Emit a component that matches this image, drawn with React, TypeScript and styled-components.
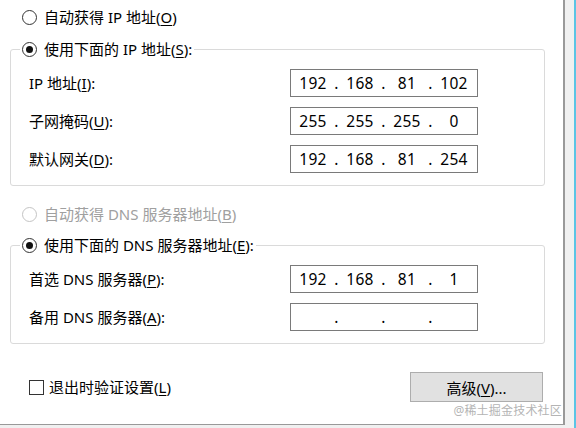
import React from 'react';
import styled, { createGlobalStyle } from 'styled-components';

const GlobalStyle = createGlobalStyle`
  html, body {
    margin: 0;
    padding: 0;
    background: #f0f0f0;
  }
  body {
    font-family: "Noto Sans", "Noto Sans CJK SC", sans-serif;
    font-size: 15px;
    color: #000;
  }
`;

const Screen = styled.div`
  display: flex;
  width: 576px;
  height: 428px;
  background: #f0f0f0;
  overflow: hidden;
`;

const Window = styled.div`
  position: relative;
  width: 565px;
  height: 425px;
  box-sizing: border-box;
  background: #fff;
  border-right: 2px solid #999;
  border-bottom: 1px solid #999;
  padding-top: 6px;
  display: flex;
  flex-direction: column;
`;

const Gutter = styled.div`
  flex: 1;
`;

const BlueEdge = styled.div`
  width: 2px;
  background: #5bc4e5;
`;

const OptionRow = styled.label<{ $disabled?: boolean }>`
  display: flex;
  align-items: center;
  height: 22px;
  line-height: 22px;
  gap: 7px;
  color: ${p => (p.$disabled ? '#a0a0a0' : '#000')};
  white-space: nowrap;
`;

const TopOption = styled(OptionRow)<{ $gapTop?: number }>`
  padding-left: 22px;
  margin-top: ${p => p.$gapTop ?? 0}px;
`;

const Radio = styled.span<{ $checked?: boolean; $disabled?: boolean }>`
  position: relative;
  width: 13px;
  height: 13px;
  border: 1px solid ${p => (p.$disabled ? '#c4c4c4' : '#333')};
  border-radius: 50%;
  background: #fff;
  flex-shrink: 0;

  &::after {
    content: '';
    display: ${p => (p.$checked ? 'block' : 'none')};
    position: absolute;
    left: 3px;
    top: 3px;
    width: 7px;
    height: 7px;
    border-radius: 50%;
    background: #111;
  }
`;

const Group = styled.fieldset<{ $gapTop: number }>`
  margin: ${p => p.$gapTop}px 18px 0 10px;
  padding: 9px 0 12px 18px;
  border: 1px solid #dadada;
  border-radius: 3px;
  min-inline-size: 0;
`;

const Legend = styled.legend`
  margin-left: -9px;
  padding: 0 2px;
`;

const Fields = styled.div`
  display: grid;
  grid-template-columns: 261px 188px;
  row-gap: 10px;
  align-items: center;
`;

const FieldLabel = styled.span`
  line-height: 22px;
  white-space: nowrap;
`;

const IpBox = styled.div`
  box-sizing: border-box;
  width: 188px;
  height: 28px;
  border: 1px solid #7a7a7a;
  display: flex;
  align-items: center;
  padding-left: 5px;
  font-size: 15.5px;
  letter-spacing: 0.3px;
`;

const Octet = styled.span`
  width: 34px;
  text-align: center;
`;

const Dot = styled.span`
  width: 13px;
  text-align: center;
`;

const Key = styled.u`
  text-underline-offset: 2px;
`;

const Footer = styled.div`
  margin: 28px 20px 0 29px;
  height: 30px;
  display: flex;
  align-items: center;
  justify-content: space-between;
`;

const CheckRow = styled.label`
  display: flex;
  align-items: center;
  gap: 5px;
  line-height: 22px;
`;

const CheckBox = styled.span`
  box-sizing: border-box;
  width: 15px;
  height: 15px;
  border: 1px solid #333;
  background: #fff;
`;

const Button = styled.button`
  box-sizing: border-box;
  width: 133px;
  height: 30px;
  border: 1px solid #adadad;
  background: #e1e1e1;
  font-family: inherit;
  font-size: 15px;
  color: #000;
  padding: 0;
`;

const Watermark = styled.div`
  position: absolute;
  right: 1px;
  bottom: 6px;
  font-size: 12px;
  line-height: 14px;
  color: #b4b4b4;
  letter-spacing: 0.2px;
`;

const IpField = ({ parts }: { parts: string[] }) => (
  <IpBox>
    {parts.map((p, i) => (
      <React.Fragment key={i}>
        {i > 0 && <Dot>.</Dot>}
        <Octet>{p}</Octet>
      </React.Fragment>
    ))}
  </IpBox>
);

const Caption = ({ text, k, colon }: { text: string; k: string; colon?: boolean }) => (
  <>
    {text}(<Key>{k}</Key>){colon ? ':' : ''}
  </>
);

export default function App() {
  return (
    <>
      <GlobalStyle />
      <Screen>
        <Window>
          <TopOption>
            <Radio />
            <span><Caption text="自动获得 IP 地址" k="O" /></span>
          </TopOption>

          <Group $gapTop={10}>
            <Legend>
              <OptionRow>
                <Radio $checked />
                <span><Caption text="使用下面的 IP 地址" k="S" colon /></span>
              </OptionRow>
            </Legend>
            <Fields>
              <FieldLabel><Caption text="IP 地址" k="I" colon /></FieldLabel>
              <IpField parts={['192', '168', '81', '102']} />
              <FieldLabel><Caption text="子网掩码" k="U" colon /></FieldLabel>
              <IpField parts={['255', '255', '255', '0']} />
              <FieldLabel><Caption text="默认网关" k="D" colon /></FieldLabel>
              <IpField parts={['192', '168', '81', '254']} />
            </Fields>
          </Group>

          <TopOption $disabled $gapTop={17}>
            <Radio $disabled />
            <span><Caption text="自动获得 DNS 服务器地址" k="B" /></span>
          </TopOption>

          <Group $gapTop={9}>
            <Legend>
              <OptionRow>
                <Radio $checked />
                <span><Caption text="使用下面的 DNS 服务器地址" k="E" colon /></span>
              </OptionRow>
            </Legend>
            <Fields>
              <FieldLabel><Caption text="首选 DNS 服务器" k="P" colon /></FieldLabel>
              <IpField parts={['192', '168', '81', '1']} />
              <FieldLabel><Caption text="备用 DNS 服务器" k="A" colon /></FieldLabel>
              <IpField parts={['', '', '', '']} />
            </Fields>
          </Group>

          <Footer>
            <CheckRow>
              <CheckBox />
              <span><Caption text="退出时验证设置" k="L" /></span>
            </CheckRow>
            <Button>
              <Caption text="高级" k="V" />...
            </Button>
          </Footer>

          <Watermark>@稀土掘金技术社区</Watermark>
        </Window>
        <Gutter />
        <BlueEdge />
      </Screen>
    </>
  );
}
